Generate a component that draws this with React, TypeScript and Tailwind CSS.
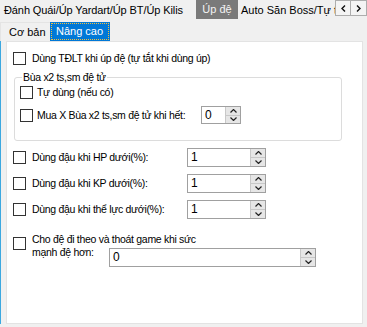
import React from 'react';

const Check: React.FC = () => (
    <div className="w-[13px] h-[13px] border border-[#333333] bg-white shrink-0"></div>
);

const Spin: React.FC<{ value: string, className: string }> = ({ value, className }) => (
    <div className={`flex shrink-0 border border-[#a0a0a0] bg-white ${className}`}>
        <div className="flex-1 pl-[3px] flex items-center text-[12px] tracking-normal text-black">{value}</div>
        <div className="w-[15px] flex flex-col border-l border-[#c8c8c8]">
            <div className="flex-1 bg-[#e6e6e6] border-b border-[#c8c8c8] flex items-center justify-center">
                <svg width="7" height="4" viewBox="0 0 7 4"><path d="M0.5 3.5 L3.5 0.5 L6.5 3.5" fill="none" stroke="#222" strokeWidth="1.2" /></svg>
            </div>
            <div className="flex-1 bg-[#e6e6e6] flex items-center justify-center">
                <svg width="7" height="4" viewBox="0 0 7 4"><path d="M0.5 0.5 L3.5 3.5 L6.5 0.5" fill="none" stroke="#222" strokeWidth="1.2" /></svg>
            </div>
        </div>
    </div>
);

const App: React.FC = () => {
    return (
        <div className="w-[367px] h-[327px] bg-[#f0f0f0] text-[11px] leading-[13px] text-black overflow-hidden" style={{ fontFamily: '"Liberation Sans", Arial, sans-serif' }}>
            {/* Top tab row */}
            <div className="flex h-[20px]">
                <div className="w-[196px] pl-[4px] flex items-center whitespace-nowrap overflow-hidden tracking-[-0.1px]">Đánh Quái/Úp Yardart/Úp BT/Úp Kilis</div>
                <div className="w-[42px] h-[19px] bg-[#7a7a7a] text-[#f4f4f4] flex items-center justify-center whitespace-nowrap">Úp đệ</div>
                <div className="w-[97px] pl-[3px] flex items-center whitespace-nowrap overflow-hidden">Auto Săn Boss/Tự tìm</div>
                <div className="w-[16px] h-[16px] border border-[#adadad] bg-[#f4f4f4] flex items-center justify-center">
                    <svg width="5" height="7" viewBox="0 0 5 7"><path d="M4 0.5 L1 3.5 L4 6.5" fill="none" stroke="#111" strokeWidth="1.4" /></svg>
                </div>
                <div className="w-[16px] h-[16px] border border-l-0 border-[#adadad] bg-[#f4f4f4] flex items-center justify-center">
                    <svg width="5" height="7" viewBox="0 0 5 7"><path d="M1 0.5 L4 3.5 L1 6.5" fill="none" stroke="#111" strokeWidth="1.4" /></svg>
                </div>
            </div>

            {/* Sub tab row */}
            <div className="flex h-[21px] pt-[2px]">
                <div className="w-[50px] pl-[8px] flex items-center border-t border-l border-[#e4e4e4]">Cơ bản</div>
                <div className="w-[60px] bg-[#0078d7] p-[1px]">
                    <div className="h-full border border-dotted border-[#f0c040] text-white flex items-center pl-[4px]">Nâng cao</div>
                </div>
            </div>

            {/* Body */}
            <div className="flex h-[283px]">
                <div className="w-[1px] bg-[#3ca8e0]"></div>
                <div className="w-[5px]"></div>
                <div className="w-[357px] bg-white border border-[#e3e3e3] flex flex-col text-[10.5px] tracking-[-0.3px]">
                    <div className="flex items-center mt-[10px] ml-[6px] h-[13px]">
                        <Check />
                        <span className="ml-[6px] whitespace-nowrap">Dùng TĐLT khi úp đệ (tự tắt khi dùng úp)</span>
                    </div>

                    {/* Group box */}
                    <div className="mt-[12px] ml-[7px] w-[328px] h-[64px] border border-[#dcdcdc] rounded-[3px] flex flex-col">
                        <div className="-mt-[7px] ml-[7px] px-[1px] bg-white self-start whitespace-nowrap">Bùa x2 ts,sm đệ tử</div>
                        <div className="flex items-center mt-[2px] ml-[5px] h-[13px]">
                            <Check />
                            <span className="ml-[4px] whitespace-nowrap">Tự dùng (nếu có)</span>
                        </div>
                        <div className="flex items-center mt-[7px] ml-[5px] h-[18px]">
                            <Check />
                            <span className="ml-[4px] whitespace-nowrap w-[164px] shrink-0">Mua X Bùa x2 ts,sm đệ tử khi hết:</span>
                            <Spin value="0" className="w-[40px] h-[18px]" />
                        </div>
                    </div>

                    {['Dùng đậu khi HP dưới(%):', 'Dùng đậu khi KP dưới(%):', 'Dùng đậu khi thể lực dưới(%):'].map((label) => (
                        <div key={label} className="flex items-center mt-[7px] ml-[6px] h-[19px]">
                            <Check />
                            <span className="ml-[6px] w-[155px] shrink-0 whitespace-nowrap">{label}</span>
                            <Spin value="1" className="w-[79px] h-[19px]" />
                        </div>
                    ))}

                    {/* Last block */}
                    <div className="flex mt-[14px] ml-[6px]">
                        <div className="mt-[4px]"><Check /></div>
                        <div className="ml-[6px] flex flex-col">
                            <div className="h-[13px] whitespace-nowrap">Cho đệ đi theo và thoát game khi sức</div>
                            <div className="flex">
                                <span className="w-[77px] shrink-0 h-[13px] whitespace-nowrap">mạnh đệ hơn:</span>
                                <Spin value="0" className="w-[207px] h-[19px] mt-[2px]" />
                            </div>
                        </div>
                    </div>
                </div>
            </div>
        </div>
    );
};

export default App;
